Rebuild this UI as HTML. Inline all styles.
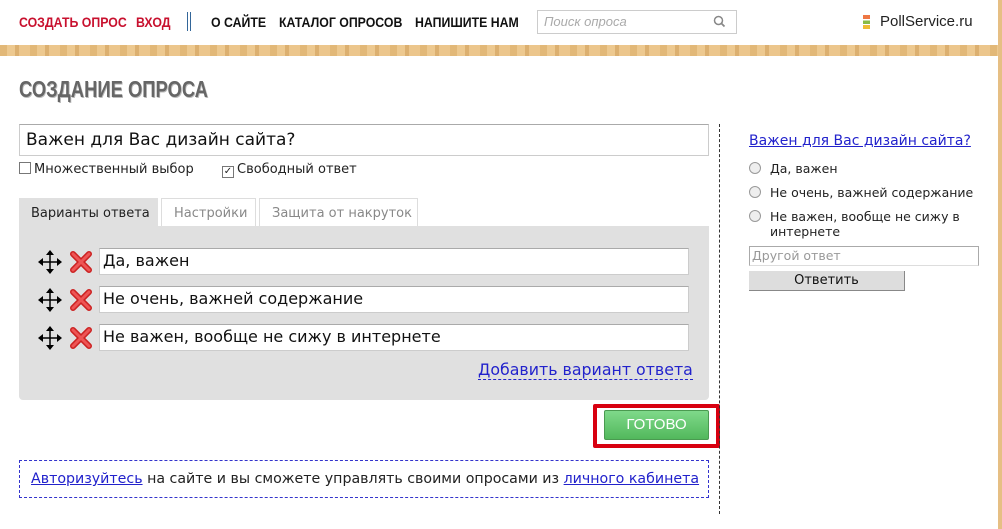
<!DOCTYPE html>
<html><head><meta charset="utf-8"><style>
*{margin:0;padding:0;box-sizing:border-box}
body{width:1002px;height:529px;background:#fff;font-family:"DejaVu Sans",Verdana,sans-serif;position:relative;overflow:hidden}
.a{position:absolute}
.nav{font-family:"Liberation Sans",sans-serif;font-size:14px;font-weight:bold;transform:scaleX(.88);transform-origin:left;top:14px;white-space:nowrap}
.wood{left:0;top:45px;width:998px;height:11px;background:repeating-linear-gradient(90deg,#e2b878 0 7px,#edc990 7px 15px,#dcb070 15px 19px,#ecc68c 19px 30px)}
.inp{background:#fff;border:1px solid #ccc;border-top-color:#aaa;font-size:16px;padding-left:3px;line-height:24px}
</style></head><body>
<div class="a nav" style="left:19px;color:#c8102e">СОЗДАТЬ ОПРОС</div>
<div class="a nav" style="left:136px;color:#c8102e">ВХОД</div>
<div class="a" style="left:187px;top:12px;width:4px;height:19px;border-left:1px solid #369;border-right:1px solid #369"></div>
<div class="a nav" style="left:211px;color:#111">О САЙТЕ</div>
<div class="a nav" style="left:279px;color:#111">КАТАЛОГ ОПРОСОВ</div>
<div class="a nav" style="left:415px;color:#111">НАПИШИТЕ НАМ</div>
<div class="a" style="left:537px;top:10px;width:200px;height:24px;border:1px solid #ccc;font-family:'Liberation Sans';font-style:italic;font-size:13px;color:#aaa;padding:3px 6px">Поиск опроса</div>
<svg class="a" style="left:713px;top:15px" width="13" height="13"><circle cx="5.5" cy="5.5" r="4" fill="none" stroke="#888" stroke-width="1.5"/><path d="M8.5 8.5l3 3" stroke="#888" stroke-width="1.8"/></svg>
<div class="a" style="left:863px;top:15px;width:7px;height:14px;background:linear-gradient(#e74 0 30%,#fff 30% 40%,#8b4 40% 65%,#fff 65% 72%,#eb3 72%)"></div>
<div class="a" style="left:880px;top:13px;font-family:'Liberation Sans';font-size:15px;color:#222">PollService.ru</div>
<div class="a wood"></div>
<div class="a" style="left:998px;top:0;width:4px;height:529px;background:#e6bf84"></div>
<div class="a" style="left:19px;top:76px;font-family:'Liberation Sans';font-weight:bold;font-size:23px;color:#666;transform:scaleX(.8);transform-origin:left;text-shadow:1px 1px 0 #bbb">СОЗДАНИЕ ОПРОСА</div>
<div class="a inp" style="left:19px;top:124px;width:690px;height:32px;font-size:17px;line-height:30px;padding-left:6px;color:#111">Важен для Вас дизайн сайта?</div>
<div class="a" style="left:19px;top:162px;font-size:13px;color:#222"><span style="display:inline-block;width:12px;height:12px;border:1px solid #777;vertical-align:-1px;margin-right:3px"></span>Множественный выбор</div>
<div class="a" style="left:222px;top:162px;font-size:13px;color:#222"><span style="display:inline-block;width:12px;height:12px;border:1px solid #777;vertical-align:-1px;margin-right:3px;font-size:10px;line-height:10px;text-align:center">✓</span>Свободный ответ</div>
<div class="a" style="left:19px;top:198px;width:139px;height:30px;background:#e0e0e0;font-size:13px;color:#222;padding:8px 0 0 12px">Варианты ответа</div>
<div class="a" style="left:161px;top:198px;width:95px;height:28px;border:1px solid #ddd;border-bottom:none;font-size:13px;color:#888;padding:7px 0 0 12px">Настройки</div>
<div class="a" style="left:259px;top:198px;width:159px;height:28px;border:1px solid #ddd;border-bottom:none;font-size:13px;color:#888;padding:7px 0 0 12px">Защита от накруток</div>
<div class="a" style="left:19px;top:226px;width:690px;height:174px;background:#e0e0e0;border-radius:0 0 4px 4px"></div>
<svg class="a" style="left:37px;top:249px" width="60" height="104">
<defs><g id="m"><path d="M12 3v18M3 12h18" stroke="#000" stroke-width="1.5"/><path d="M12 0l-4 5h8zM12 24l-4-5h8zM0 12l5-4v8zM24 12l-5-4v8z" fill="#000"/></g>
<g id="x"><path d="M4 4l16 16M20 4L4 20" stroke="#c22" stroke-width="6" stroke-linecap="round"/><path d="M4 4l16 16M20 4L4 20" stroke="#e55" stroke-width="3" stroke-linecap="round"/></g></defs>
<use href="#m" x="1" y="1"/><use href="#x" x="32" y="1"/>
<use href="#m" x="1" y="39"/><use href="#x" x="32" y="39"/>
<use href="#m" x="1" y="77"/><use href="#x" x="32" y="77"/>
</svg>
<div class="a inp" style="left:99px;top:248px;width:590px;height:27px;color:#111">Да, важен</div>
<div class="a inp" style="left:99px;top:286px;width:590px;height:27px;color:#111">Не очень, важней содержание</div>
<div class="a inp" style="left:99px;top:324px;width:590px;height:27px;color:#111">Не важен, вообще не сижу в интернете</div>
<div class="a" style="left:478px;top:361px;font-size:15.8px;color:#22c;border-bottom:1px dashed #22c;line-height:18px">Добавить вариант ответа</div>
<div class="a" style="left:593px;top:404px;width:127px;height:44px;border:4px solid #d80010;border-radius:2px"></div>
<div class="a" style="left:604px;top:410px;width:105px;height:30px;background:linear-gradient(#7fd98a,#52b85c);border:1px solid #4a9a50;border-radius:2px;color:#fff;font-family:'Liberation Sans';font-size:15px;text-align:center;line-height:28px">ГОТОВО</div>
<div class="a" style="left:19px;top:460px;width:690px;height:38px;border:1px dashed #33c;font-size:14.2px;color:#222;padding:10px 0 0 11px;white-space:nowrap"><span style="color:#22c;text-decoration:underline">Авторизуйтесь</span> на сайте и вы сможете управлять своими опросами из <span style="color:#22c;text-decoration:underline">личного кабинета</span></div>
<div class="a" style="left:719px;top:124px;height:390px;border-left:1px dashed #333"></div>
<div class="a" style="left:749px;top:133px;font-size:14px;color:#22c;text-decoration:underline">Важен для Вас дизайн сайта?</div>
<div class="a" style="left:749px;top:161px;font-size:12.5px;color:#222;line-height:15px;width:235px">
<div style="margin-bottom:9px"><span style="display:inline-block;width:12px;height:12px;border-radius:50%;border:1px solid #999;background:#eee;vertical-align:-1px;margin-right:9px"></span>Да, важен</div>
<div style="margin-bottom:9px"><span style="display:inline-block;width:12px;height:12px;border-radius:50%;border:1px solid #999;background:#eee;vertical-align:-1px;margin-right:9px"></span>Не очень, важней содержание</div>
<div style="padding-left:21px;text-indent:-21px"><span style="display:inline-block;width:12px;height:12px;border-radius:50%;border:1px solid #999;background:#eee;vertical-align:-1px;margin-right:9px;text-indent:0"></span>Не важен, вообще не сижу в интернете</div>
</div>
<div class="a" style="left:749px;top:246px;width:230px;height:20px;border:1px solid #aaa;border-bottom-color:#ddd;font-size:12.5px;color:#999;padding-left:2px;line-height:18px">Другой ответ</div>
<div class="a" style="left:749px;top:271px;width:156px;height:20px;background:#ddd;border-bottom:1px solid #888;border-right:1px solid #888;font-size:13px;color:#111;text-align:center;line-height:20px">Ответить</div>
</body></html>
